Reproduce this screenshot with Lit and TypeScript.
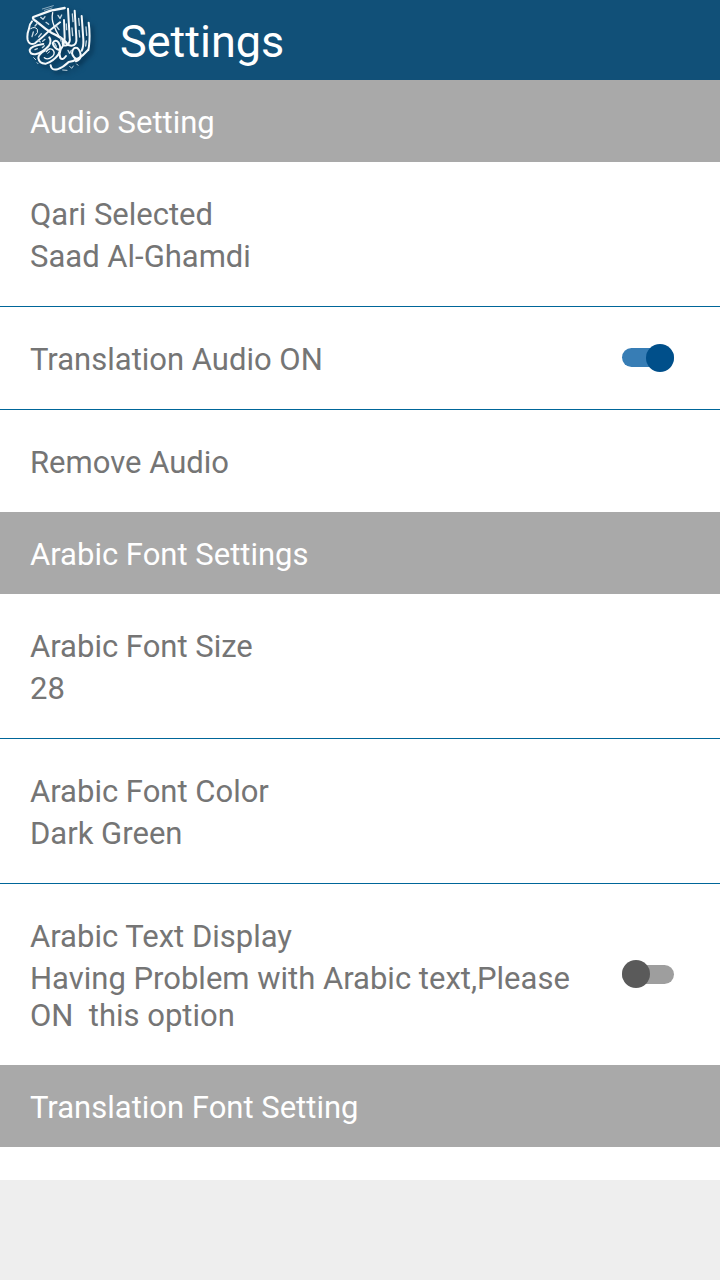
import { LitElement, html, css, svg, nothing } from "lit";
import { customElement, property, state } from "lit/decorators.js";

interface Item {
  id: string;
  title: string;
  detail?: string;
  toggle?: boolean;
}

interface Section {
  heading: string;
  items: Item[];
}

const SECTIONS: Section[] = [
  {
    heading: "Audio Setting",
    items: [
      { id: "qari", title: "Qari Selected", detail: "Saad Al-Ghamdi" },
      { id: "translation-audio", title: "Translation Audio ON", toggle: true },
      { id: "remove-audio", title: "Remove Audio" },
    ],
  },
  {
    heading: "Arabic Font Settings",
    items: [
      { id: "font-size", title: "Arabic Font Size", detail: "28" },
      { id: "font-color", title: "Arabic Font Color", detail: "Dark Green" },
      {
        id: "text-display",
        title: "Arabic Text Display",
        detail: "Having Problem with Arabic text,Please ON  this option",
        toggle: true,
      },
    ],
  },
  { heading: "Translation Font Setting", items: [] },
];

// Round calligraphic emblem: long strokes, then the small vowel marks.
const EMBLEM = svg`
  <g fill="none" stroke-linecap="round" stroke-linejoin="round">
    <g stroke="#f4f8fa" stroke-width="6">
      <path d="M164 24 L122 32 L70 51 Q66 56 76 62 L106 86 Q124 100 140 106 Q160 116 172 132" stroke-width="7" />
      <path d="M66 64 Q58 72 57 86 Q50 104 53 120 Q58 137 75 130 Q98 112 118 92 L150 67" />
      <path d="M128 38 Q124 58 131 74 Q137 92 146 106" stroke-width="4" />
      <path d="M62 86 Q74 78 82 88 Q86 98 76 106" stroke-width="3" />
      <path d="M100 132 Q62 138 59 150 Q59 164 76 163 Q98 158 116 138 Q126 124 118 112" />
      <path d="M104 152 Q86 162 85 174 Q88 192 108 191 Q130 184 145 164 Q156 144 146 128 Q136 116 128 130 Q132 146 148 150" />
      <path d="M103 173 Q114 182 128 169 Q137 158 128 149 Q118 142 109 155" stroke-width="4" />
      <path d="M122 196 Q124 212 142 208 Q160 202 176 186 Q206 182 234 150" />
      <path d="M208 178 Q190 178 186 160 Q188 140 202 144 Q213 154 212 170 Q210 180 198 184" />
      <path d="M162 60 L164 112 Q164 134 152 148 Q146 162 151 174 Q158 182 168 168" />
      <path d="M174 26 L179 112 Q182 128 170 136 Q156 140 158 124" />
      <path d="M194 32 L199 112 Q202 136 184 137 L171 134" />
      <path d="M215 48 L220 118 Q221 142 215 152" />
      <path d="M236 68 Q241 104 237 138 L235 150" />
    </g>
    <g stroke="#c6d8e3" stroke-width="4">
      <path d="M97 27 L130 17 M103 31 L126 24" stroke-width="2" />
      <path d="M92 52 L99 58 L105 50 M108 67 L116 73 M144 46 L150 55 L155 45" />
      <path d="M83 69 L75 78 M70 96 L66 110 M94 101 L86 111 M139 78 L147 89" />
      <path d="M187 42 L189 65 M206 55 L208 76 M186 84 L188 107 M207 91 L209 111" />
      <path d="M228 81 L230 106 M229 123 L227 138 M174 151 L179 160 L184 151" />
      <path d="M83 121 L91 126 M98 124 L105 118 M75 149 L82 146 M97 143 L103 137" />
      <path d="M71 173 L77 179 M81 188 L84 191 M113 160 L119 155" stroke-width="3" />
      <path d="M158 210 L171 211 M179 199 L185 205 L190 198 M200 192 L204 196" stroke-width="3" />
      <path d="M134 130 L139 139 M169 72 L170 89 M152 114 L153 123" />
    </g>
  </g>
`;

@customElement("app-bar")
class AppBar extends LitElement {
  @property() heading = "";

  static styles = css`
    :host {
      display: block;
      background: #115078;
      color: #fff;
    }
    .bar {
      display: flex;
      align-items: center;
      gap: 24px;
      height: 80px;
      padding: 0 24px;
    }
    .emblem {
      width: 72px;
      height: 80px;
      flex: none;
      filter: drop-shadow(3px 3px 2px #06304e);
    }
    .title {
      margin: 0;
      font-size: 45px;
      line-height: 52px;
      font-weight: 400;
      padding-top: 3px;
    }
  `;

  render() {
    return html`
      <header class="bar">
        <svg class="emblem" viewBox="42 0 216 240" aria-hidden="true">${EMBLEM}</svg>
        <h1 class="title">${this.heading}</h1>
      </header>
    `;
  }
}

@customElement("setting-row")
class SettingRow extends LitElement {
  @property({ attribute: false }) item!: Item;
  @property({ type: Boolean }) checked = false;

  static styles = css`
    :host {
      display: block;
      background: #fff;
    }
    .row {
      box-sizing: border-box;
      display: flex;
      align-items: center;
      justify-content: space-between;
      gap: 30px;
      width: 100%;
      margin: 0;
      padding: 30px 46px 31px 30px;
      border: 0;
      background: none;
      color: #757575;
      font: inherit;
      text-align: left;
      cursor: pointer;
    }
    .text {
      display: flex;
      flex-direction: column;
      gap: 5px;
      padding-top: 4px;
    }
    .detail {
      white-space: pre-wrap;
    }
    .switch {
      appearance: none;
      flex: none;
      display: grid;
      align-items: center;
      width: 52px;
      height: 28px;
      margin: 0;
      cursor: pointer;
    }
    .switch::before,
    .switch::after {
      content: "";
      grid-area: 1 / 1;
    }
    .switch::before {
      height: 19px;
      border-radius: 10px;
      background: #9e9e9e;
    }
    .switch::after {
      width: 28px;
      height: 28px;
      border-radius: 50%;
      background: #5a5a5a;
    }
    .switch:checked::before {
      background: #377db5;
    }
    .switch:checked::after {
      justify-self: end;
      background: #004f8a;
    }
  `;

  private onChange(e: Event) {
    this.checked = (e.target as HTMLInputElement).checked;
  }

  render() {
    const { id, title, detail, toggle } = this.item;
    const text = html`
      <span class="text">
        <span>${title}</span>
        ${detail ? html`<span class="detail">${detail}</span>` : nothing}
      </span>
    `;
    return toggle
      ? html`<label class="row" for=${id}>
          ${text}
          <input class="switch" id=${id} type="checkbox" role="switch"
            .checked=${this.checked} @change=${this.onChange} />
        </label>`
      : html`<button class="row" type="button">${text}</button>`;
  }
}

@customElement("app-root")
class AppRoot extends LitElement {
  @state() private enabled = new Set(["translation-audio"]);

  static styles = css`
    :host {
      display: flex;
      flex-direction: column;
      min-height: 100vh;
      background: #fff;
      font-family: Roboto, sans-serif;
      font-size: 31px;
      line-height: 37px;
    }
    .settings {
      flex: 1;
    }
    .heading {
      margin: 0;
      padding: 24px 30px 21px;
      background: #a9a9a9;
      color: #fff;
      font-size: 31px;
      line-height: 37px;
      font-weight: 400;
    }
    .item + .item {
      border-top: 1px solid #006699;
    }
    .banner {
      height: 100px;
      background: #eee;
    }
  `;

  render() {
    return html`
      <app-bar heading="Settings"></app-bar>
      <main class="settings">
        ${SECTIONS.map(
          (s) => html`
            <section>
              <h2 class="heading">${s.heading}</h2>
              ${s.items.map(
                (i) => html`<setting-row class="item" .item=${i}
                  .checked=${this.enabled.has(i.id)}></setting-row>`
              )}
            </section>
          `
        )}
      </main>
      <footer class="banner"></footer>
    `;
  }
}
